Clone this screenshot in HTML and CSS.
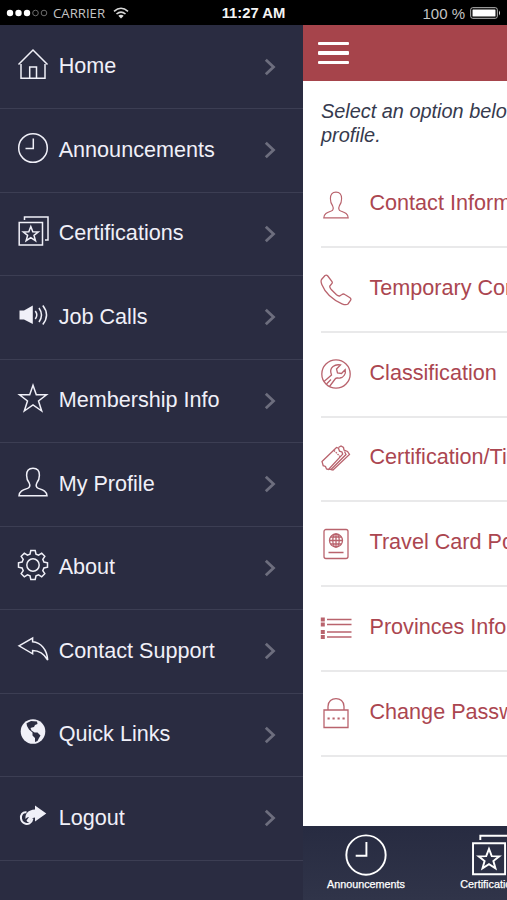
FILE: index.html
```html
<!DOCTYPE html>
<html lang="en">
<head>
<meta charset="utf-8">
<title>My Profile</title>
<link rel="stylesheet" href="styles.css">
</head>
<body>
<svg class="defs" aria-hidden="true">
  <symbol id="clock" viewBox="0 0 32 32"><circle cx="16" cy="16" r="14.3"/><path d="M16.3 6.5V16.5H8.5"/></symbol>
  <symbol id="cert" viewBox="0 0 32 32"><path d="M2.2 7.5H25.500V30H2.2ZM7.500 5V2H31V25H28"/><path d="M13.800 11.600l2 5.200 5.500.2-4.300 3.400 1.500 5.300-4.700-3.100-4.700 3.100 1.500-5.300-4.300-3.400 5.500-.2z"/></symbol>
  <symbol id="person" viewBox="0 0 32 32" preserveAspectRatio="none"><path d="M16 2.3C11.5 2.3 9.6 4.8 9.6 9.2c0 3 .9 5.6 2.5 7.6 1.3 2.8.8 4.7-1.5 5.6C6 24 2.3 25 2 29.8H30C29.7 25 26 24 21.4 22.4 19.1 21.500 18.600 19.600 19.900 16.800c1.600-2 2.500-4.600 2.500-7.600C22.400 4.800 20.500 2.300 16 2.300Z"/></symbol>
  <symbol id="chev" viewBox="0 0 12 18"><path d="M1.800 1.800L9.500 9L1.800 16.200"/></symbol>
</svg>
<div class="screen">
  <header class="status">
    <div class="carrier">
      <svg class="signal" viewBox="0 0 42 10"><g fill="#fff"><circle cx="4" cy="5" r="3.200"/><circle cx="12.500" cy="5" r="3.200"/><circle cx="21" cy="5" r="3.200"/></g><g fill="none" stroke="#777" stroke-width=".9"><circle cx="29.500" cy="5" r="2.800"/><circle cx="38" cy="5" r="2.800"/></g></svg>
      <span>CARRIER</span>
      <svg class="wifi" viewBox="0 0 16 12"><path d="M1 4.300Q8-1.800 15 4.300M3.500 7Q8 3.200 12.500 7"/><path class="dot" d="M5.300 8.800Q8 6.700 10.700 8.800L8 11.500Z"/></svg>
    </div>
    <div class="time">11:27 AM</div>
    <div class="power"><span>100 %</span>
      <svg class="battery" viewBox="0 0 31 12"><rect x=".7" y=".7" width="26.600" height="10.600" rx="2" fill="none" stroke="#bbb"/><rect x="2.500" y="2.500" width="23" height="7" rx=".5" fill="#fff"/><path d="M29 3.500q2 2.500 0 5z" fill="#ddd"/></svg>
    </div>
  </header>
  <div class="body">
    <nav class="menu">
      <a class="item"><svg class="ico" viewBox="0 0 32 32"><path d="M1.500 16.500L16 2L30.500 16.500M4 16V30.200H28V16M12.700 30V19H19.500V30"/></svg><span>Home</span><svg class="chev"><use href="#chev"/></svg></a>
      <a class="item"><svg class="ico"><use href="#clock"/></svg><span>Announcements</span><svg class="chev"><use href="#chev"/></svg></a>
      <a class="item"><svg class="ico"><use href="#cert"/></svg><span>Certifications</span><svg class="chev"><use href="#chev"/></svg></a>
      <a class="item"><svg class="ico" viewBox="0 0 32 32"><path class="solid" d="M2.500 11.500H7L15.800 6.500V25L7 20.500H2.500Z"/><path d="M18.300 12q3 4 0 8M22 9q5 7 0 14M25.800 6.500q7.500 9.500 0 19"/></svg><span>Job Calls</span><svg class="chev"><use href="#chev"/></svg></a>
      <a class="item"><svg class="ico" viewBox="0 0 32 32"><path d="M16 3.200L19.300 12.800H29.500L21.500 19L24.700 29L16 23L7.300 29L10.500 19L2.500 12.800H12.700Z"/></svg><span>Membership Info</span><svg class="chev"><use href="#chev"/></svg></a>
      <a class="item"><svg class="ico"><use href="#person"/></svg><span>My Profile</span><svg class="chev"><use href="#chev"/></svg></a>
      <a class="item"><svg class="ico" viewBox="0 0 32 32"><circle cx="16" cy="16" r="6.200"/><path d="M13.800 1.500h4.400l.8 3.600 2.600 1.100 3.100-2 3.100 3.100-2 3.100 1.100 2.600 3.600.8v4.400l-3.600.8-1.100 2.600 2 3.100-3.100 3.100-3.100-2-2.600 1.100-.8 3.600h-4.400l-.8-3.600-2.600-1.100-3.100 2-3.100-3.100 2-3.100-1.100-2.600-3.600-.8v-4.400l3.600-.8 1.100-2.600-2-3.100 3.100-3.100 3.100 2 2.600-1.100z"/></svg><span>About</span><svg class="chev"><use href="#chev"/></svg></a>
      <a class="item"><svg class="ico" viewBox="0 0 32 32"><path d="M2 12.800L15.600 5V8.800C24 9.500 30 16.500 30.700 27C26.500 20 22 17.700 15.600 17.600V20.800Z"/></svg><span>Contact Support</span><svg class="chev"><use href="#chev"/></svg></a>
      <a class="item"><svg class="ico" viewBox="0 0 32 32"><circle class="solid" cx="16" cy="15.500" r="12.300"/><path class="cut" d="M9.500 7.200L14 5L20 5.600L20.500 8L18 9L17 11L15 11.500L13.500 12L14.500 14.500L17.500 16.500H20.500L23.500 19.500L22 22L20.500 25L18 26V22L15.500 19.500L15.500 16.500L12 13.500L10 10Z"/></svg><span>Quick Links</span><svg class="chev"><use href="#chev"/></svg></a>
      <a class="item"><svg class="ico" viewBox="0 0 32 32"><path class="solid" d="M18 5.500L29.300 13.500L18 21.500V17.500C14.500 17.500 14.500 20.500 12.500 22.500Q10.500 23 9.500 20.500L12 17C10 17 9.500 18 8.500 19C8 13.500 11 10 18 9.500Z"/><path class="ring" d="M9.500 12.300C5.500 11.700 3.500 15 4 18.500C4.500 23 9 25 12.500 23.300Q15 21.500 15.500 18.500"/></svg><span>Logout</span><svg class="chev"><use href="#chev"/></svg></a>
    </nav>
    <main class="page">
      <div class="top"><div class="burger"><i></i><i></i><i></i></div></div>
      <div class="content">
        <p class="intro">Select an option below<br>profile.</p>
        <div class="options">
          <a class="option"><svg class="ico person"><use href="#person"/></svg><span>Contact Information</span></a>
          <a class="option"><svg class="ico" viewBox="0 0 32 32"><path d="M1.500 5.500L5 1.500Q6.500.5 7.800 2L12 7.500Q12.800 8.800 11.500 10L9.800 12Q9.500 13.300 11 15.200L16.500 20.700Q18.500 22.500 20 21.800L22 20.500Q23.300 19.500 24.800 20.500L30 23.800Q31.500 25 30.500 26.500L28 30Q26 31.500 22 29.800C13 25.800 5 18.500 1.800 10.500Q.5 7.300 1.500 5.500Z"/></svg><span>Temporary Contact</span></a>
          <a class="option"><svg class="ico" viewBox="0 0 32 32"><circle cx="16" cy="16" r="14.200"/><path d="M4 23.500L11.500 17C10.500 14.500 9.800 11 13 8.500C15.500 6.500 18 6.500 20.500 7L16.500 11L17.500 15L21.500 15.500L25.200 11.500C26.200 16 23.500 19.500 20 20C17.500 20.300 16.500 19.500 15.500 20.500L9.500 28.500M6.500 26L11 21.500"/></svg><span>Classification</span></a>
          <a class="option"><svg class="ico" viewBox="0 0 32 32"><path d="M2 18.500L16.500 4.500L18.500 5.200L19.500 8.200L22 9L22.700 11.200L8.500 26.500L6.500 26L5.500 23.500L3.200 22.700Z"/><path d="M18.500 4.500L21 3L23.500 4.500L24 7L27.500 8.500L29.500 11.500L13 27L11 26.500M24.500 8.500L26 11.500L11 26.500L9 26.200"/><path stroke-dasharray="1.500 1" d="M14 7.500L20 13.500"/></svg><span>Certification/Ticket</span></a>
          <a class="option"><svg class="ico" viewBox="0 0 32 32"><rect x="4" y="1.500" width="24" height="29" rx="2"/><circle cx="16" cy="12.500" r="6.500"/><ellipse cx="16" cy="12.500" rx="3.200" ry="6.500"/><path d="M16 6V19M9.500 12.500H22.500M10.500 9H21.500M10.500 16H21.500M8.500 24.500H23.500"/></svg><span>Travel Card Portal</span></a>
          <a class="option"><svg class="ico" viewBox="0 0 32 32"><path d="M7 6.500H31.500M7 11.500H31.500M7 19H31.500M7 24H31.500"/><g class="solid"><rect x=".8" y="4.500" width="4" height="4"/><rect x=".8" y="9.500" width="4" height="4"/><rect x=".8" y="17" width="4" height="4"/><rect x=".8" y="22" width="4" height="4"/></g></svg><span>Provinces Info</span></a>
          <a class="option"><svg class="ico" viewBox="0 0 32 32"><path d="M4 13H28V30.500H4ZM8 13V9.500C8 -1 24 -1 24 9.500V13"/><path class="dots" d="M7.500 21.500H25"/></svg><span>Change Password</span></a>
        </div>
      </div>
      <footer class="tabs">
        <a class="tab"><svg class="ico"><use href="#clock"/></svg><span>Announcements</span></a>
        <a class="tab"><svg class="ico"><use href="#cert"/></svg><span>Certifications</span></a>
      </footer>
    </main>
  </div>
</div>
</body>
</html>
```
FILE: styles.css
```css
* { box-sizing: border-box; }
body { margin: 0; font-family: "Liberation Sans", Arial, sans-serif; background: #000; }
.defs { display: none; }
svg { display: block; flex: none; }
.screen { width: 507px; height: 900px; overflow: hidden; display: flex; flex-direction: column; }

.status {
  height: 25px;
  flex: none;
  display: grid;
  grid-template-columns: 1fr auto 1fr;
  align-items: center;
  padding: 1px 6px 0;
  background: #000;
  color: #c4c4c4;
  font-size: 14px;
}
.carrier, .power { display: flex; align-items: center; }
.carrier span { font-family: "Open Sans", sans-serif; font-size: 13.2px; margin: 0 8px 0 5px; }
.signal { width: 42px; height: 10px; }
.wifi { width: 16px; height: 12px; fill: none; stroke: #d8d8d8; stroke-width: 1.6; }
.wifi .dot { fill: #ddd; stroke: none; }
.time { color: #f4f4f4; font-size: 14.8px; font-weight: bold; }
.power { justify-content: flex-end; gap: 5px; font-size: 15px; }
.battery { width: 31px; height: 12px; }

.body { flex: 1; display: flex; min-height: 0; }
.ico { width: 32px; height: 32px; fill: none; stroke: currentColor; stroke-width: 1.5; }
.ico .solid { fill: currentColor; stroke: none; }

.menu { width: 303px; flex: none; padding-top: .7px; background: #2a2c41; color: #f0f0f8; overflow: hidden; }
.item {
  height: 83.5px;
  display: flex;
  align-items: center;
  padding: 0 27px 1px 17px;
  border-bottom: 1px solid #3c3e53;
  font-size: 21.6px;
}
.item span { flex: 1; margin-left: 9.7px; white-space: nowrap; }
.item .ico { margin-top: -4px; }
.item .cut { fill: #2a2c41; stroke: none; }
.item .ring { stroke-width: 2; }
.chev { width: 12px; height: 18px; fill: none; stroke: #6d6e7e; stroke-width: 2.8; margin-top: 1px; }

.page { flex: 1; min-width: 0; overflow: hidden; background: #fff; display: flex; flex-direction: column; }
.top { height: 56px; flex: none; background: #a6444b; padding: 17px 15px; }
.burger { width: 31px; height: 22px; display: flex; flex-direction: column; justify-content: space-between; }
.burger i { height: 3.2px; background: #fff; border-radius: 1px; }
.content { flex: 1; min-height: 0; padding: 18px 0 0 18px; overflow: hidden; }
.intro { margin: 0; height: 64.4px; font-size: 19.9px; line-height: 24px; font-style: italic; color: #363a4e; white-space: nowrap; }
.option {
  height: 84.75px;
  display: flex;
  align-items: center;
  gap: 17.5px;
  padding-bottom: 1px;
  border-bottom: 2px solid #e9e9ea;
  color: #ab4650;
  font-size: 21.6px;
  white-space: nowrap;
}
.option span { padding-bottom: 2.4px; }
.option .ico { stroke: #b9636d; stroke-width: 1.3; margin: 1px 0 0 -1px; }
.option .solid { fill: #b9636d; }
.option .person { width: 28px; height: 30px; margin: 1px 2px 0 1px; }
.option .dots { stroke-width: 2.2; stroke-dasharray: 2.2 2.8; }

.tabs { height: 74px; flex: none; display: flex; background: linear-gradient(#272b41, #303449); color: #fff; }
.tab { width: 125px; flex: none; display: flex; flex-direction: column; align-items: center; padding-top: 7px; font-size: 10.8px; }
.tab:first-child { width: 126px; }
.tab .ico { width: 44px; height: 44px; stroke-width: 1.4; }
.tab span { line-height: 13px; padding-top: 1px; -webkit-text-stroke: .25px #fff; }
```
